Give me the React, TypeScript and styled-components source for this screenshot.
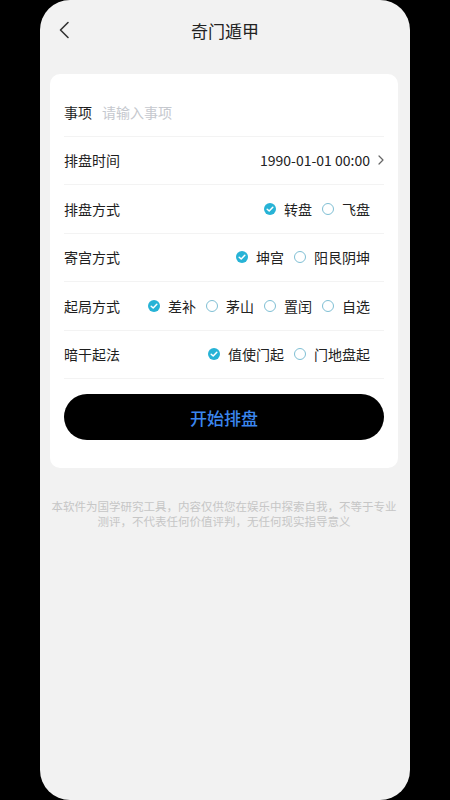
import styled, { createGlobalStyle } from 'styled-components';

const GlobalStyle = createGlobalStyle`
  html, body {
    margin: 0;
    padding: 0;
    background: #000;
  }
  body {
    font-family: "Noto Sans CJK SC", "Noto Sans", sans-serif;
  }
`;

const Screen = styled.div`
  width: 370px;
  height: 800px;
  margin: 0 40px;
  background: #f2f2f2;
  border-radius: 30px;
  overflow: hidden;
  display: flex;
  flex-direction: column;
`;

const Header = styled.div`
  height: 60px;
  display: flex;
  align-items: center;
  justify-content: center;
  position: relative;
`;

const BackButton = styled.div`
  position: absolute;
  left: 18px;
  top: 20px;
  width: 14px;
  height: 20px;
  display: flex;
  align-items: center;
`;

const Title = styled.div`
  font-size: 17px;
  color: #222;
`;

const Card = styled.div`
  margin: 14px 0 0 10px;
  width: 348px;
  background: #fff;
  border-radius: 10px;
  padding: 14px 14px 28px;
  box-sizing: border-box;
`;

const Row = styled.div`
  height: 48.5px;
  display: flex;
  align-items: center;
  border-bottom: 1px solid #f3f3f3;
  box-sizing: border-box;
`;

const Label = styled.div`
  font-size: 14px;
  color: #1e1e1e;
  flex-shrink: 0;
`;

const Placeholder = styled.div`
  font-size: 14px;
  color: #c5c8ce;
  margin-left: 10px;
`;

const Value = styled.div`
  margin-left: auto;
  display: flex;
  align-items: center;
  gap: 8px;
  font-size: 14px;
  color: #222;
`;

const Options = styled.div`
  margin-left: auto;
  margin-right: 14px;
  display: flex;
  align-items: center;
  gap: 10px;
`;

const Option = styled.div`
  display: flex;
  align-items: center;
  gap: 8px;
  font-size: 14px;
  color: #222;
`;

const Dot = styled.span<{ $on: boolean }>`
  width: 12px;
  height: 12px;
  border-radius: 50%;
  box-sizing: border-box;
  display: flex;
  align-items: center;
  justify-content: center;
  background: ${(p) => (p.$on ? '#27b3d6' : '#fff')};
  border: ${(p) => (p.$on ? 'none' : '1.4px solid #7fbfd4')};
`;

const StartButton = styled.button`
  display: block;
  width: 100%;
  height: 46px;
  margin-top: 15px;
  border: none;
  border-radius: 23px;
  background: #000;
  color: #3b86ee;
  font-family: inherit;
  font-size: 17px;
  font-weight: 500;
`;

const Notice = styled.div`
  margin: 31px 0 0 10px;
  width: 348px;
  text-align: center;
  font-size: 11.5px;
  line-height: 15px;
  color: #c6c6c6;
`;

interface Group {
  label: string;
  options: string[];
  active: number;
}

const groups: Group[] = [
  { label: '排盘方式', options: ['转盘', '飞盘'], active: 0 },
  { label: '寄宫方式', options: ['坤宫', '阳艮阴坤'], active: 0 },
  { label: '起局方式', options: ['差补', '茅山', '置闰', '自选'], active: 0 },
  { label: '暗干起法', options: ['值使门起', '门地盘起'], active: 0 },
];

function Radio({ on }: { on: boolean }) {
  return (
    <Dot $on={on}>
      {on && (
        <svg width="8" height="8" viewBox="0 0 8 8">
          <path d="M1.2 4.2 L3.2 6 L6.8 2.2" fill="none" stroke="#fff" strokeWidth="1.5" strokeLinecap="round" strokeLinejoin="round" />
        </svg>
      )}
    </Dot>
  );
}

function App() {
  return (
    <>
      <GlobalStyle />
      <Screen>
        <Header>
          <BackButton>
            <svg width="12" height="18" viewBox="0 0 12 18">
              <path d="M10 1.5 L2.5 9 L10 16.5" fill="none" stroke="#333" strokeWidth="1.6" strokeLinecap="round" strokeLinejoin="round" />
            </svg>
          </BackButton>
          <Title>奇门遁甲</Title>
        </Header>
        <Card>
          <Row>
            <Label>事项</Label>
            <Placeholder>请输入事项</Placeholder>
          </Row>
          <Row>
            <Label>排盘时间</Label>
            <Value>
              1990-01-01 00:00
              <svg width="6" height="10" viewBox="0 0 6 10">
                <path d="M1 1 L5 5 L1 9" fill="none" stroke="#666" strokeWidth="1.2" strokeLinecap="round" strokeLinejoin="round" />
              </svg>
            </Value>
          </Row>
          {groups.map((g) => (
            <Row key={g.label}>
              <Label>{g.label}</Label>
              <Options>
                {g.options.map((o, i) => (
                  <Option key={o}>
                    <Radio on={i === g.active} />
                    {o}
                  </Option>
                ))}
              </Options>
            </Row>
          ))}
          <StartButton>开始排盘</StartButton>
        </Card>
        <Notice>
          本软件为国学研究工具，内容仅供您在娱乐中探索自我，不等于专业测评，不代表任何价值评判，无任何现实指导意义
        </Notice>
      </Screen>
    </>
  );
}

export default App;
